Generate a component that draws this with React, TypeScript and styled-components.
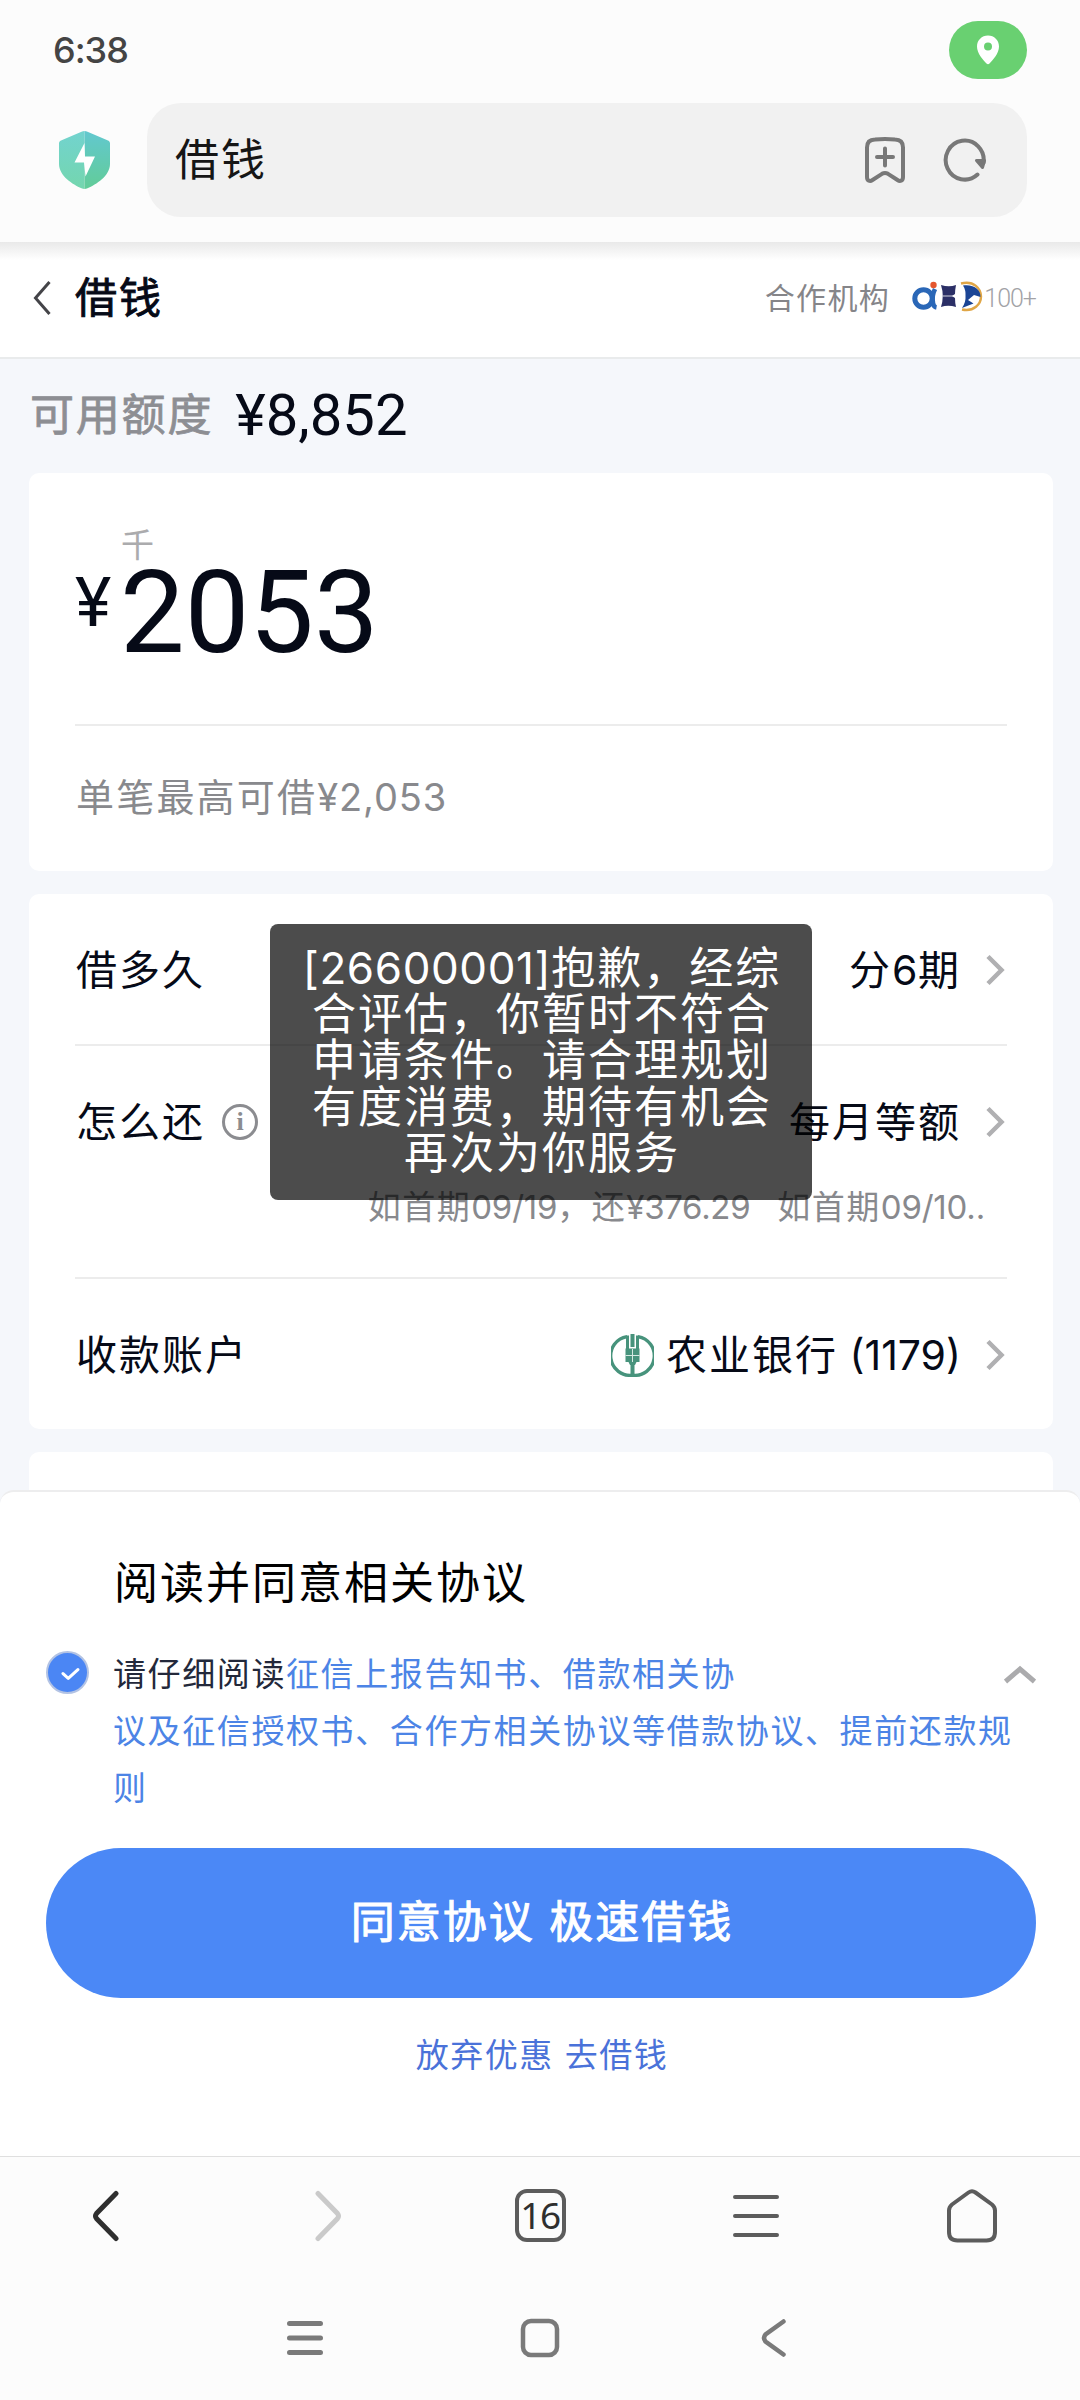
import React from 'react';
import styled, { createGlobalStyle, css } from 'styled-components';

const GlobalStyle = createGlobalStyle`
  * { box-sizing: border-box; }
  body {
    margin: 0;
    background: #fcfcfc;
    font-family: Inter, "Noto Sans CJK SC", sans-serif;
    color: #060a17;
  }
  svg { display: block; flex: none; }
`;

const Screen = styled.div`
  position: relative;
  width: 1080px;
  height: 2400px;
  overflow: hidden;
  display: flex;
  flex-direction: column;
  background: #fcfcfc;
`;

const Label = styled.span<{ $size: number; $color?: string; $gap?: number; $stroke?: number }>`
  font-family: Inter, "Noto Sans CJK SC", sans-serif;
  font-size: ${(p) => p.$size}px;
  line-height: 1;
  letter-spacing: ${(p) => p.$gap ?? 2}px;
  color: ${(p) => p.$color ?? 'inherit'};
  white-space: pre;
  ${(p) => p.$stroke && css`-webkit-text-stroke: ${p.$stroke}px currentColor;`}
`;

const Digits = styled.span<{ $gap: number }>`
  letter-spacing: ${(p) => p.$gap}px;
`;

const BrowserTop = styled.header`
  height: 242px;
  flex: none;
  background: #fcfcfc;
`;

const StatusBar = styled.div`
  height: 103px;
  padding: 0 53px 3px 53px;
  display: flex;
  align-items: center;
  justify-content: space-between;
`;

const Clock = styled.span`
  font: 500 36px/1 Inter, sans-serif;
  letter-spacing: -1px;
  color: #444444;
`;

const LocationPill = styled.div`
  width: 78px;
  height: 58px;
  border-radius: 29px;
  background: #69d071;
  display: flex;
  align-items: center;
  justify-content: center;
`;

const AddressRow = styled.div`
  display: flex;
  align-items: center;
  padding: 0 53px 0 59px;
  gap: 37px;
`;

const AddressBox = styled.div`
  flex: 1;
  height: 114px;
  border-radius: 34px;
  background: #f1f1f1;
  display: flex;
  align-items: center;
  padding: 0 40px 0 28px;
`;

const AddressIcons = styled.div`
  margin-left: auto;
  display: flex;
  align-items: center;
  gap: 37px;
`;

const PageNav = styled.nav`
  height: 117px;
  flex: none;
  padding: 0 44px 3px 32px;
  display: flex;
  align-items: center;
  background: linear-gradient(#e9e9e9, #f5f5f5 10px, #ffffff 18px);
  border-bottom: 2px solid #e9ebec;
`;

const NavTitle = styled.div`
  margin-left: 23px;
`;

const Partners = styled.div`
  margin-left: auto;
  display: flex;
  align-items: center;
`;

const PartnerLogos = styled.div`
  margin: 0 1px 2px 22px;
`;

const PartnerCount = styled.span`
  font: 300 25px/1 Roboto, sans-serif;
  letter-spacing: -1px;
  color: #a2a2a6;
`;

const Content = styled.main`
  height: 1131px;
  flex: none;
  overflow: hidden;
  padding: 0 27px 0 29px;
  background: #f5f7fb;
`;

const QuotaRow = styled.div`
  height: 114px;
  padding: 0 0 3px 1px;
  display: flex;
  align-items: center;
  gap: 22px;
`;

const QuotaValue = styled.span`
  font: 400 58px/1 Roboto, sans-serif;
  color: #060a17;
`;

const Card = styled.section<{ $height: number }>`
  height: ${(p) => p.$height}px;
  margin-bottom: 23px;
  padding: 0 46px;
  border-radius: 10px;
  background: #ffffff;
`;

const AmountBlock = styled.div`
  height: 253px;
  border-bottom: 2px solid #ececec;
  display: flex;
  padding-top: 56px;
`;

const Currency = styled.span`
  width: 46px;
  margin-top: 39px;
  font: 400 69px/1 Roboto, sans-serif;
`;

const AmountColumn = styled.div`
  display: flex;
  flex-direction: column;
`;

const Amount = styled.span`
  font: 400 115px/96px Roboto, sans-serif;
  margin-top: 3px;
  margin-left: -1px;
`;

const LimitHint = styled.div`
  height: 145px;
  padding: 0 0 3px 1px;
  display: flex;
  align-items: center;
`;

const Option = styled.div<{ $height: number; $last?: boolean }>`
  height: ${(p) => p.$height}px;
  border-bottom: ${(p) => (p.$last ? 'none' : '2px solid #ececec')};
`;

const OptionLine = styled.div`
  height: 152px;
  padding-left: 1px;
  display: flex;
  align-items: center;
`;

const InfoMark = styled.span`
  width: 36px;
  height: 36px;
  margin-left: 17px;
  border: 3px solid #8b8c90;
  border-radius: 50%;
  display: flex;
  align-items: center;
  justify-content: center;
  font: 700 26px/1 "Liberation Serif", serif;
  color: #8b8c90;
`;

const OptionValue = styled.div`
  margin-left: auto;
  padding-right: 2px;
  display: flex;
  align-items: center;
`;

const ArrowSlot = styled.div`
  margin-left: 24px;
`;

const BankLogo = styled.div`
  margin-right: 12px;
`;

const Schedule = styled.div`
  display: flex;
  justify-content: flex-end;
  padding-right: 22px;
  margin-top: -7px;
`;

const Sheet = styled.section`
  height: 666px;
  flex: none;
  background: #ffffff;
  display: flex;
  flex-direction: column;
  padding: 0 44px 0 46px;
  border-top: 2px solid #ededee;
  border-radius: 14px 14px 0 0;
`;

const SheetWrap = styled.div`
  background: #f5f7fb;
  flex: none;
`;

const SheetTitle = styled.h2`
  margin: 0 0 0 68px;
  height: 155px;
  padding-top: 69px;
  font-weight: 400;
  line-height: 1;
  color: #000000;
`;

const Agreement = styled.div`
  display: grid;
  grid-template-columns: 43px 1fr;
  column-gap: 24px;
  height: 201px;
`;

const CheckCircle = styled.div`
  width: 43px;
  height: 43px;
  margin-top: 4px;
  padding: 3px 0 0 4px;
  border-radius: 50%;
  border: 2px solid #b3c3e4;
  background: #4b86f4;
  display: flex;
  align-items: center;
  justify-content: center;
`;

const AgreementText = styled.div`
  margin-top: -1px;
  font-size: 33px;
  line-height: 57px;
  letter-spacing: 1.6px;
  color: #23283a;
  white-space: nowrap;
`;

const AgreementLine = styled.div`
  display: flex;
  align-items: center;
  height: 57px;
`;

const AgreementLink = styled.span`
  color: #4c84e6;
`;

const CollapseIcon = styled.div`
  margin-left: auto;
`;

const PrimaryButton = styled.button`
  height: 150px;
  padding: 0 0 2px 2px;
  border: 0;
  border-radius: 75px;
  background: #4b88f6;
  color: #ffffff;
  display: flex;
  align-items: center;
  justify-content: center;
`;

const SecondaryButton = styled.button`
  margin: 41px auto 0;
  padding: 0 0 0 2px;
  border: 0;
  background: none;
`;

const BrowserBar = styled.footer`
  height: 122px;
  flex: none;
  padding-bottom: 4px;
  border-top: 1px solid #dfdfdf;
  display: grid;
  grid-template-columns: repeat(5, 1fr);
  align-items: center;
  justify-items: center;
`;

const TabCount = styled.div`
  width: 51px;
  height: 53px;
  padding-bottom: 2px;
  border: 4px solid #5c5c5c;
  border-radius: 12px;
  display: flex;
  align-items: center;
  justify-content: center;
  font: 400 37px/1 "Noto Sans", sans-serif;
  letter-spacing: -1.5px;
  color: #2f2f2f;
`;

const SystemBar = styled.footer`
  height: 122px;
  flex: none;
  padding: 0 188px 3px;
  display: grid;
  grid-template-columns: repeat(3, 1fr);
  align-items: center;
  justify-items: center;
`;

const Toast = styled.div`
  position: absolute;
  left: 270px;
  top: 924px;
  width: 542px;
  height: 276px;
  padding: 21px 0 0 2px;
  border-radius: 8px;
  background: rgba(0, 0, 0, 0.7);
  color: #ffffff;
  font-size: 44px;
  line-height: 46px;
  letter-spacing: 2px;
  text-align: center;
`;

const ToastLine = styled.div`
  height: 46.2px;
  white-space: nowrap;
`;

const PinIcon = () => (
  <svg width="24" height="30" viewBox="0 0 24 30">
    <path fillRule="evenodd" fill="#fff" d="M12 0.5C5.8 0.5 1 5.2 1 11.5c0 7 6 13.300 9.500 17 .9.900 2.100.900 3 0C17 24.800 23 18.500 23 11.500 23 5.200 18.200.5 12 .5Zm0 7a4 4 0 1 1 0 8 4 4 0 0 1 0-8Z" />
  </svg>
);

const ShieldIcon = () => (
  <svg width="51" height="58" viewBox="0 0 51 58">
    <defs>
      <linearGradient id="shieldLeft" x1="0" y1="0" x2="0" y2="1">
        <stop offset="0" stopColor="#72d3cf" />
        <stop offset="1" stopColor="#74d6ae" />
      </linearGradient>
      <linearGradient id="shieldRight" x1="0" y1="0" x2="0" y2="1">
        <stop offset="0" stopColor="#62c8cf" />
        <stop offset="1" stopColor="#62cc98" />
      </linearGradient>
    </defs>
    <path fill="url(#shieldLeft)" d="M25.500 0c-1 0-2 .3-3 .8L2 9.500C.6 10.100 0 11 0 12.500V33c0 12 14 20.500 22.500 24.300 1 .5 2 .7 3 .7Z" />
    <path fill="url(#shieldRight)" d="M25.500 0c1 0 2 .3 3 .8L49 9.500c1.400.6 2 1.500 2 3V33c0 12-14 20.500-22.500 24.300-1 .5-2 .7-3 .7Z" />
    <path fill="#fff" d="M25.500 12 15.500 31.500h9.500L26.500 45.500 36 25.500h-10Z" />
  </svg>
);

const BookmarkIcon = () => (
  <svg width="42" height="48" viewBox="0 0 42 48" fill="none" stroke="#787878" strokeWidth="4" strokeLinecap="round" strokeLinejoin="round">
    <path d="M3 41V11.500Q3 3.500 11 3.500Q21 2.500 31 3.500Q39 3.500 39 11.500V41C39 45 36 45.700 33.500 44L24 37.800Q21 36 18 37.800L8.500 44C6 45.700 3 45 3 41Z" />
    <path d="M13 21h16M21 12.500v17" />
  </svg>
);

const ReloadIcon = () => (
  <svg width="44" height="44" viewBox="0 0 44 44" fill="none" stroke="#787878" strokeWidth="4" strokeLinecap="round" strokeLinejoin="round">
    <path d="M34.500 36.500A19 19.500 0 1 1 40.500 25" />
    <path fill="#787878" strokeWidth="3" d="M33.500 22.500h8l-2 7Z" />
  </svg>
);

const PartnerMarks = () => (
  <svg width="71" height="32" viewBox="0 0 71 32">
    <circle cx="11.500" cy="17.500" r="8.700" fill="none" stroke="#2a67b7" strokeWidth="5" />
    <path fill="none" stroke="#2a67b7" strokeWidth="4.600" d="M23 8q-3.500 7-2 14 .6 4 3.500 4.500" />
    <circle cx="21.500" cy="4" r="3.200" fill="#e4572e" />
    <path fill="#2b2f66" d="M29 4q8 2.500 15 0-1 5-1 9l-3 2 3 2q0 5 1 9-8-2.500-15 0 3.500-11 0-22Z" />
    <path stroke="#fff" strokeWidth="0.800" d="M31 15h12" />
    <path fill="none" stroke="#e0a646" strokeWidth="2.400" d="M49 2.500C62 -1 69 8 69 15.500S62 31 50 28.500" />
    <path fill="#1b4595" d="M51 4.500C62 3 69 9 68.500 16L62 14l-6 5 5.500 3.500L50 27q4-6 3.500-11.500Q54 9 51 4.500Z" />
  </svg>
);

const BankIcon = () => (
  <svg width="43" height="43" viewBox="0 0 43 43" fill="none" stroke="#47937c">
    <path strokeWidth="3.400" d="M16 2.600A19.500 19.500 0 0 0 21.500 41.200A19.500 19.500 0 0 0 27 2.600" />
    <path strokeWidth="3" d="M16.500 1.500V15M26.500 1.500V15" />
    <path strokeWidth="4" d="M21.500 0v13M21.500 28v14" />
    <path fill="#47937c" stroke="none" d="M14.500 14.500H28.500V28H25.500L24 31h-5l-1.500-3h-3Z" />
    <path stroke="#d5e9e2" strokeWidth="1" d="M14.500 21.500h14M21.500 15v13" />
  </svg>
);

const Arrow = () => (
  <svg width="20" height="32" viewBox="0 0 20 32" fill="none" stroke="#b0b0b2" strokeWidth="4.500">
    <path d="M3 2.500 16.500 16 3 29.500" />
  </svg>
);

export default function App() {
  return (
    <Screen>
      <GlobalStyle />
      <BrowserTop>
        <StatusBar>
          <Clock>6:38</Clock>
          <LocationPill><PinIcon /></LocationPill>
        </StatusBar>
        <AddressRow>
          <ShieldIcon />
          <AddressBox>
            <Label $size={44} $color="#161616">借钱</Label>
            <AddressIcons>
              <BookmarkIcon />
              <ReloadIcon />
            </AddressIcons>
          </AddressBox>
        </AddressRow>
      </BrowserTop>

      <PageNav>
        <svg width="20" height="36" viewBox="0 0 20 36" fill="none" stroke="#444448" strokeWidth="3">
          <path d="M17.500 2 3.500 18l14 16" />
        </svg>
        <NavTitle><Label $size={42} $stroke={0.9}>借钱</Label></NavTitle>
        <Partners>
          <Label $size={30} $gap={1.4} $color="#858589">合作机构</Label>
          <PartnerLogos><PartnerMarks /></PartnerLogos>
          <PartnerCount>100+</PartnerCount>
        </Partners>
      </PageNav>

      <Content>
        <QuotaRow>
          <Label $size={44} $gap={1.8} $stroke={0.8} $color="#8d8e93">可用额度</Label>
          <QuotaValue>¥8,852</QuotaValue>
        </QuotaRow>

        <Card $height={398}>
          <AmountBlock>
            <Currency>¥</Currency>
            <AmountColumn>
              <Label $size={33} $gap={0} $color="#ababad">千</Label>
              <Amount>2053</Amount>
            </AmountColumn>
          </AmountBlock>
          <LimitHint>
            <Label $size={38} $gap={2.200} $color="#88898d">单笔最高可借<Digits $gap={0.9}>¥2,053</Digits></Label>
          </LimitHint>
        </Card>

        <Card $height={535}>
          <Option $height={152}>
            <OptionLine>
              <Label $size={41}>借多久</Label>
              <OptionValue>
                <Label $size={41}>分<Digits $gap={0.5}>6</Digits>期</Label>
                <ArrowSlot><Arrow /></ArrowSlot>
              </OptionValue>
            </OptionLine>
          </Option>
          <Option $height={233}>
            <OptionLine>
              <Label $size={41}>怎么还</Label>
              <InfoMark>i</InfoMark>
              <OptionValue>
                <Label $size={41}>每月等额</Label>
                <ArrowSlot><Arrow /></ArrowSlot>
              </OptionValue>
            </OptionLine>
            <Schedule>
              <Label $size={33} $gap={1.5} $color="#88898d">
                如首期<Digits $gap={-0.2}>09/19</Digits>，还<Digits $gap={-0.3}>{'¥376.29\u00a0\u00a0 '}</Digits>如首期<Digits $gap={-0.2}>09/10..</Digits>
              </Label>
            </Schedule>
          </Option>
          <Option $height={150} $last>
            <OptionLine>
              <Label $size={41}>收款账户</Label>
              <OptionValue>
                <BankLogo><BankIcon /></BankLogo>
                <Label $size={41}>农业银行<Digits $gap={0}> (1179)</Digits></Label>
                <ArrowSlot><Arrow /></ArrowSlot>
              </OptionValue>
            </OptionLine>
          </Option>
        </Card>

        <Card $height={80} />
      </Content>

      <SheetWrap>
        <Sheet>
          <SheetTitle><Label $size={44}>阅读并同意相关协议</Label></SheetTitle>
          <Agreement>
            <CheckCircle>
              <svg width="20" height="14" viewBox="0 0 22 16" fill="none" stroke="#fff" strokeWidth="3.500" strokeLinecap="round" strokeLinejoin="round">
                <path d="M3 7.500 9 13 20 3" />
              </svg>
            </CheckCircle>
            <AgreementText>
              <AgreementLine>
                请仔细阅读<AgreementLink>征信上报告知书、借款相关协</AgreementLink>
                <CollapseIcon>
                  <svg width="32" height="20" viewBox="0 0 32 20" fill="none" stroke="#ababad" strokeWidth="5">
                    <path d="M1.500 16.500 16 4l14.500 12.500" />
                  </svg>
                </CollapseIcon>
              </AgreementLine>
              <AgreementLine>
                <AgreementLink>议及征信授权书、合作方相关协议等借款协议、提前还款规</AgreementLink>
              </AgreementLine>
              <AgreementLine>
                <AgreementLink>则</AgreementLink>
              </AgreementLine>
            </AgreementText>
          </Agreement>
          <PrimaryButton><Label $size={44} $stroke={1}>同意协议 极速借钱</Label></PrimaryButton>
          <SecondaryButton><Label $size={33} $gap={1.5} $color="#4a72d9">放弃优惠 去借钱</Label></SecondaryButton>
        </Sheet>
      </SheetWrap>

      <BrowserBar>
        <svg width="32" height="52" viewBox="0 0 32 52" fill="none" stroke="#2f2f2f" strokeWidth="5" strokeLinecap="round">
          <path d="M24 3.500 4.500 23.500Q2.500 26 4.500 28.500L24 48.500" />
        </svg>
        <svg width="35" height="52" viewBox="-7 0 35 52" fill="none" stroke="#cacaca" strokeWidth="5" strokeLinecap="round">
          <path d="M4 3.500 23.500 23.500Q25.500 26 23.500 28.500L4 48.500" />
        </svg>
        <TabCount>16</TabCount>
        <svg width="48" height="48" viewBox="0 0 48 48" fill="none" stroke="#5c5c5c" strokeWidth="4" strokeLinecap="round">
          <path d="M3 5h42M3 24h42M3 43h42" />
        </svg>
        <svg width="52" height="54" viewBox="0 0 52 54" fill="none" stroke="#5c5c5c" strokeWidth="4" strokeLinejoin="round">
          <path d="M3 21.500Q3 18 6 15.500L22.500 3.500Q26 1 29.500 3.500L46 15.500Q49 18 49 21.500V43Q49 51.500 40.500 51.500H11.500Q3 51.500 3 43Z" />
        </svg>
      </BrowserBar>
      <SystemBar>
        <svg width="38" height="36" viewBox="0 0 38 36" fill="none" stroke="#7a7a7a" strokeWidth="5" strokeLinecap="round">
          <path d="M3.500 3.500h31M3.500 18h31M3.500 32.500h31" />
        </svg>
        <svg width="40" height="40" viewBox="0 0 40 40" fill="none" stroke="#7a7a7a" strokeWidth="4.500">
          <rect x="3" y="3" width="34" height="34" rx="8" />
        </svg>
        <svg width="28" height="40" viewBox="0 0 28 40" fill="none" stroke="#7a7a7a" strokeWidth="4.500" strokeLinecap="round">
          <path d="M22.500 3.500 4.500 16.500Q1.500 20 4.500 23.500L22.500 36.500" />
        </svg>
      </SystemBar>

      <Toast>
        <ToastLine><Digits $gap={0.6}>[26600001]</Digits>抱歉，经综</ToastLine>
        <ToastLine>合评估，你暂时不符合</ToastLine>
        <ToastLine>申请条件。请合理规划</ToastLine>
        <ToastLine>有度消费，期待有机会</ToastLine>
        <ToastLine>再次为你服务</ToastLine>
      </Toast>
    </Screen>
  );
}
